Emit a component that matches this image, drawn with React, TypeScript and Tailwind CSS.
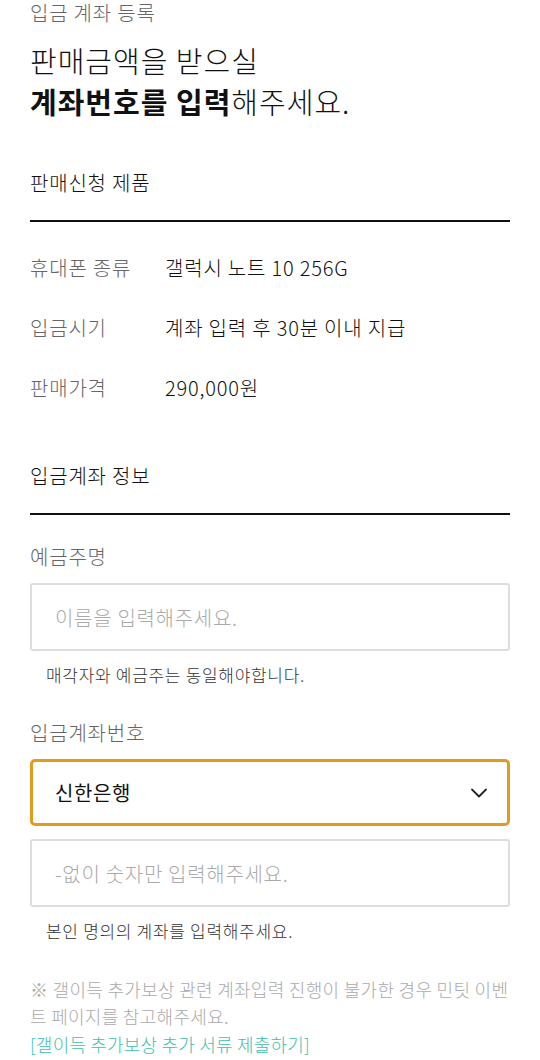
import React, { useState } from "react";

const font = {
  fontFamily: '"Noto Sans CJK KR", "Noto Sans", sans-serif',
};

const rows = [
  { label: "휴대폰 종류", value: "갤럭시 노트 10 256G" },
  { label: "입금시기", value: "계좌 입력 후 30분 이내 지급" },
  { label: "판매가격", value: "290,000원" },
];

const Chevron = () => (
  <svg width="20" height="20" viewBox="0 0 20 20" fill="none">
    <path d="M3 6.5 L10 13.5 L17 6.5" stroke="#222" strokeWidth="1.8" strokeLinecap="round" strokeLinejoin="round" />
  </svg>
);

const App = () => {
  const [name, setName] = useState("");
  const [account, setAccount] = useState("");

  return (
    <div className="w-[540px] min-h-[1060px] bg-white px-[30px] text-[#222] font-light" style={font}>
      {/* header */}
      <p className="text-[20px] tracking-[0.8px] leading-[26px] text-[#666]">입금 계좌 등록</p>
      <h1 className="mt-[14px] text-[29px] tracking-[1px] leading-[41px] font-light text-[#111]">
        판매금액을 받으실
        <br />
        <b className="font-bold">계좌번호를 입력</b>해주세요.
      </h1>

      {/* product */}
      <div className="mt-[46px] pb-[22px] border-b-2 border-[#111] text-[20px] tracking-[0.8px] leading-[30px] text-[#111]">판매신청 제품</div>
      <div className="pt-[31px] flex flex-col gap-[30px]">
        {rows.map((r) => (
          <div key={r.label} className="flex text-[20px] tracking-[0.8px] leading-[30px]">
            <span className="w-[135px] text-[#666]">{r.label}</span>
            <span className="text-[#111]">{r.value}</span>
          </div>
        ))}
      </div>

      {/* account */}
      <div className="mt-[58px] pb-[22px] border-b-2 border-[#111] text-[20px] tracking-[0.8px] leading-[30px] text-[#111]">입금계좌 정보</div>

      <p className="mt-[27px] text-[20px] tracking-[0.8px] leading-[30px] text-[#666]">예금주명</p>
      <input
        value={name}
        onChange={(e) => setName(e.target.value)}
        placeholder="이름을 입력해주세요."
        className="mt-[11px] w-full h-[68px] border-2 border-[#ddd] rounded-[3px] px-[23px] text-[20px] tracking-[0.7px] text-[#222] placeholder:text-[#aaa] outline-none"
      />
      <p className="mt-[12px] pl-[16px] text-[17px] tracking-[0.7px] leading-[24px] text-[#333]">매각자와 예금주는 동일해야합니다.</p>

      <p className="mt-[31px] text-[20px] tracking-[0.8px] leading-[30px] text-[#666]">입금계좌번호</p>
      <div className="mt-[11px] h-[67px] border-[3px] border-[#e09c1e] rounded-[5px] flex items-center justify-between pl-[22px] pr-[18px]">
        <span className="text-[20px] tracking-[0.6px] text-[#111] font-normal">신한은행</span>
        <Chevron />
      </div>
      <input
        value={account}
        onChange={(e) => setAccount(e.target.value)}
        placeholder="-없이 숫자만 입력해주세요."
        className="mt-[13px] w-full h-[68px] border-2 border-[#ddd] rounded-[3px] px-[23px] text-[20px] tracking-[0.7px] text-[#222] placeholder:text-[#aaa] outline-none"
      />
      <p className="mt-[12px] pl-[16px] text-[17px] tracking-[0.7px] leading-[24px] text-[#333]">본인 명의의 계좌를 입력해주세요.</p>

      <p className="mt-[33px] text-[18px] tracking-[0.3px] leading-[27px] text-[#aaa]">
        ※ 갤이득 추가보상 관련 계좌입력 진행이 불가한 경우 민팃 이벤트 페이지를 참고해주세요.
      </p>
      <a className="block text-[18px] tracking-[0.2px] leading-[29px] text-[#3dbfae]">[갤이득 추가보상 추가 서류 제출하기]</a>
    </div>
  );
};

export default App;
